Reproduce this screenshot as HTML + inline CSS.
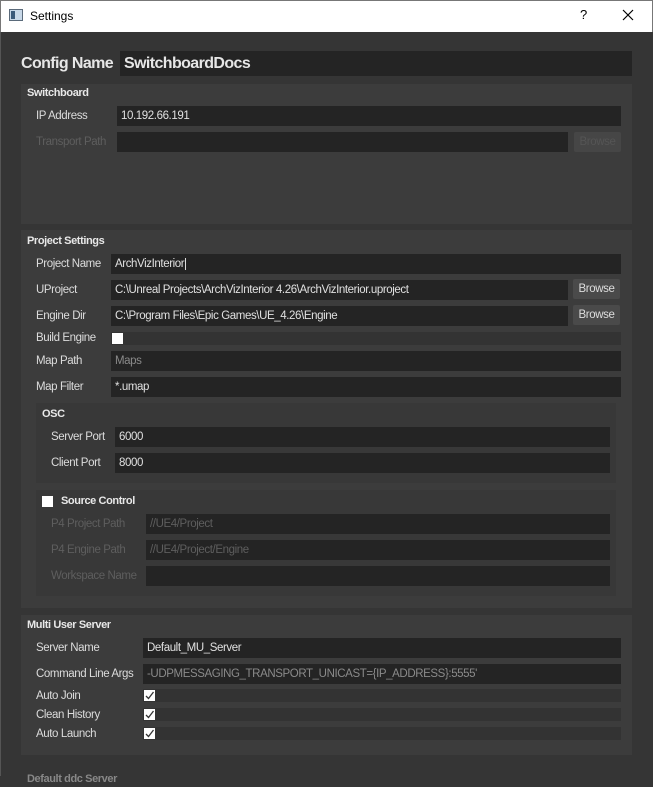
<!DOCTYPE html>
<html><head><meta charset="utf-8"><style>
*{margin:0;padding:0;box-sizing:border-box}
body{width:653px;height:776px;overflow:hidden;background:#353535;font-family:"Liberation Sans",sans-serif;font-size:11.5px;letter-spacing:-0.4px;color:#dcdcdc;position:relative}
.a{position:absolute}
.t{position:absolute;white-space:nowrap;line-height:16px}
.in{position:absolute;background:#242424;height:20px;line-height:21px;padding-left:4px;white-space:nowrap;color:#e0e0e0;overflow:hidden}
.g{position:absolute;background:#3c3c3c}
.g2{position:absolute;background:#383838}
.h{font-weight:bold;font-size:11px;color:#e8e8e8}
.dis{color:#5e5e5e}
.ph{color:#8a8a8a}
.btn{position:absolute;background:#4a4a4a;border-radius:2px;height:20px;line-height:20px;text-align:center;color:#ddd}
.cb{position:absolute;width:11px;height:11px;background:#fff}
.bar{position:absolute;background:#333;height:13px}
</style></head><body>
<div class="a" style="left:0;top:0;width:653px;height:32px;background:#fff;border:1px solid #777;border-bottom:none"></div>
<div class="a" style="left:9px;top:9px;width:14px;height:12px;border:1px solid #5a6a7a;background:#c8d8e8"><div class="a" style="left:1px;top:1px;width:4px;height:8px;background:#3a5a7a"></div></div>
<div class="t" style="left:30px;top:8px;color:#000;font-size:12px;letter-spacing:0">Settings</div>
<div class="t" style="left:580px;top:7px;color:#000;font-size:13px">?</div>
<svg class="a" style="left:622px;top:9px" width="12" height="12"><path d="M1 1L11 11M11 1L1 11" stroke="#000" stroke-width="1.2"/></svg>
<div class="a" style="left:0;top:32px;width:1px;height:744px;background:#555"></div>

<div class="t" style="left:21px;top:54px;font-size:16px;letter-spacing:-0.6px;line-height:20px;font-weight:bold;color:#e6e6e6">Config Name</div>
<div class="in" style="left:120px;top:51px;width:512px;height:25px;line-height:25px;font-size:16px;letter-spacing:-0.6px;font-weight:bold;color:#e6e6e6">SwitchboardDocs</div>

<div class="g" style="left:21px;top:84px;width:611px;height:140px"></div>
<div class="t h" style="left:27px;top:85px">Switchboard</div>
<div class="t" style="left:36px;top:108px">IP Address</div>
<div class="in" style="left:117px;top:106px;width:504px">10.192.66.191</div>
<div class="t dis" style="left:36px;top:134px">Transport Path</div>
<div class="in" style="left:117px;top:132px;width:451px"></div>
<div class="btn" style="left:574px;top:132px;width:47px;background:#464646;color:#555">Browse</div>

<div class="g" style="left:21px;top:230px;width:611px;height:378px"></div>
<div class="t h" style="left:27px;top:233px">Project Settings</div>
<div class="t" style="left:36px;top:256px">Project Name</div>
<div class="in" style="left:111px;top:254px;width:510px">ArchVizInterior<span style="border-left:1px solid #ddd;margin-left:1px"></span></div>
<div class="t" style="left:36px;top:282px">UProject</div>
<div class="in" style="left:111px;top:280px;width:457px">C:\Unreal Projects\ArchVizInterior 4.26\ArchVizInterior.uproject</div>
<div class="btn" style="left:573px;top:279px;width:47px">Browse</div>
<div class="t" style="left:36px;top:308px">Engine Dir</div>
<div class="in" style="left:111px;top:306px;width:457px">C:\Program Files\Epic Games\UE_4.26\Engine</div>
<div class="btn" style="left:573px;top:305px;width:47px">Browse</div>
<div class="t" style="left:36px;top:330px">Build Engine</div>
<div class="bar" style="left:111px;top:332px;width:510px"></div>
<div class="cb" style="left:112px;top:333px"></div>
<div class="t" style="left:36px;top:353px">Map Path</div>
<div class="in ph" style="left:111px;top:351px;width:510px">Maps</div>
<div class="t" style="left:36px;top:379px">Map Filter</div>
<div class="in" style="left:111px;top:377px;width:510px">*.umap</div>

<div class="g2" style="left:36px;top:403px;width:580px;height:80px"></div>
<div class="t h" style="left:42px;top:406px">OSC</div>
<div class="t" style="left:51px;top:429px">Server Port</div>
<div class="in" style="left:115px;top:427px;width:495px">6000</div>
<div class="t" style="left:51px;top:455px">Client Port</div>
<div class="in" style="left:115px;top:453px;width:495px">8000</div>

<div class="g2" style="left:36px;top:490px;width:580px;height:106px"></div>
<div class="cb" style="left:42px;top:496px"></div>
<div class="t h" style="left:61px;top:493px">Source Control</div>
<div class="t dis" style="left:51px;top:516px">P4 Project Path</div>
<div class="in dis" style="left:146px;top:514px;width:464px">//UE4/Project</div>
<div class="t dis" style="left:51px;top:542px">P4 Engine Path</div>
<div class="in dis" style="left:146px;top:540px;width:464px">//UE4/Project/Engine</div>
<div class="t dis" style="left:51px;top:568px">Workspace Name</div>
<div class="in" style="left:146px;top:566px;width:464px"></div>

<div class="g" style="left:21px;top:615px;width:611px;height:140px"></div>
<div class="t h" style="left:27px;top:617px">Multi User Server</div>
<div class="t" style="left:36px;top:640px">Server Name</div>
<div class="in" style="left:143px;top:638px;width:478px">Default_MU_Server</div>
<div class="t" style="left:36px;top:666px">Command Line Args</div>
<div class="in ph" style="left:143px;top:664px;width:478px">-UDPMESSAGING_TRANSPORT_UNICAST={IP_ADDRESS}:5555'</div>
<div class="t" style="left:36px;top:688px">Auto Join</div>
<div class="bar" style="left:143px;top:689px;width:478px"></div>
<div class="t" style="left:36px;top:707px">Clean History</div>
<div class="bar" style="left:143px;top:708px;width:478px"></div>
<div class="t" style="left:36px;top:726px">Auto Launch</div>
<div class="bar" style="left:143px;top:727px;width:478px"></div>
<svg class="a" style="left:144px;top:690px" width="12" height="50">
<g fill="#fff"><rect x="0" y="0" width="11" height="11"/><rect x="0" y="19" width="11" height="11"/><rect x="0" y="38" width="11" height="11"/></g>
<g fill="none" stroke="#333" stroke-width="1.3"><path d="M2 6L4.5 8.5L9.5 2"/><path d="M2 25L4.5 27.5L9.5 21"/><path d="M2 44L4.5 46.5L9.5 40"/></g>
</svg>
<div class="t h" style="left:27px;top:771px;color:#888">Default ddc Server</div>
</body></html>
